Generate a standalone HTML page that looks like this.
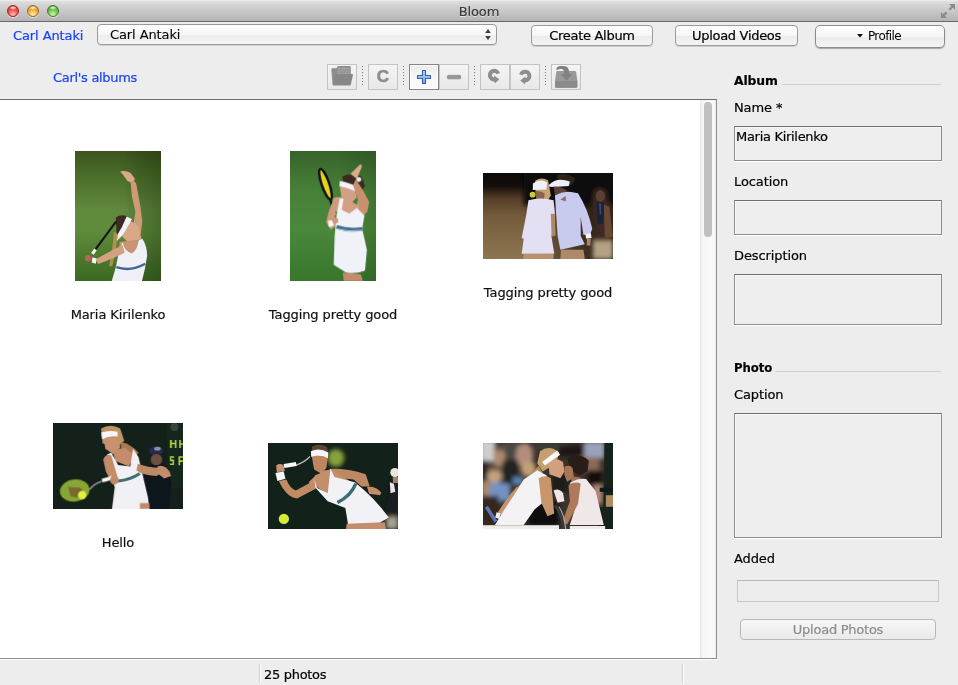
<!DOCTYPE html>
<html lang="en">
<head>
<meta charset="utf-8">
<title>Bloom</title>
<style>
*{box-sizing:border-box;margin:0;padding:0}
html,body{width:958px;height:685px;overflow:hidden;background:#ededed}
body{position:relative;font-family:"DejaVu Sans","Liberation Sans",sans-serif;font-size:13px;color:#000;line-height:16px;letter-spacing:-0.1px;-webkit-text-stroke:0.2px}
.abs{position:absolute}
#titlebar{left:0;top:0;width:958px;height:22px;background:linear-gradient(#f4f4f4 0,#e0e0e0 1px,#d6d6d6 4px,#c2c2c2 14px,#b3b3b3 21px);border-bottom:1px solid #686868}
#title{left:0;top:4px;width:958px;text-align:center;color:#3a3a3a;text-shadow:0 1px 0 rgba(255,255,255,.6)}
.tl{width:12px;height:12px;border-radius:50%;top:5px}
.lnk{color:#1742ff;white-space:nowrap}
.lbl{white-space:nowrap}
.btn{border:1px solid #9a9a9a;border-radius:4px;background:linear-gradient(#ffffff,#f6f6f6 50%,#ececec 51%,#f4f4f4);text-align:center;white-space:nowrap;box-shadow:0 1px 0 rgba(0,0,0,.12)}
.field{border:1px solid #8f8f8f;border-top-color:#6e6e6e;background:#eeeeee;box-shadow:0 1px 0 #fff,inset 1px 1px 0 #f9f9f9}
.tb{width:30px;height:26px;border:1px solid #c3c3c3;background:linear-gradient(#f4f4f4,#e8e8e8);top:64px}
.sep{width:1px;top:66px;height:19px;background:repeating-linear-gradient(#7a7a7a 0,#7a7a7a 1px,transparent 1px,transparent 3px)}
.hr{height:1px;background:#d0d0d0}
.cap{text-align:center;white-space:nowrap;color:#111}
</style>
</head>
<body>
<div id="root" class="abs" style="left:0;top:0;width:958px;height:685px;will-change:transform">
<div id="titlebar" class="abs"></div>
<div class="abs tl" style="left:7px;background:radial-gradient(ellipse 4px 2px at 50% 18%,rgba(255,255,255,.95),rgba(255,255,255,0) 100%),radial-gradient(circle at 50% 85%,#ffc4c0 0,#f2514a 50%,#c22a24 100%);border:1px solid #922;box-shadow:0 1px 0 rgba(255,255,255,.5)"></div>
<div class="abs tl" style="left:27px;background:radial-gradient(ellipse 4px 2px at 50% 18%,rgba(255,255,255,.95),rgba(255,255,255,0) 100%),radial-gradient(circle at 50% 85%,#fff0a8 0,#f2ad36 50%,#c47e16 100%);border:1px solid #9a6a22;box-shadow:0 1px 0 rgba(255,255,255,.5)"></div>
<div class="abs tl" style="left:47px;background:radial-gradient(ellipse 4px 2px at 50% 18%,rgba(255,255,255,.95),rgba(255,255,255,0) 100%),radial-gradient(circle at 50% 85%,#d6f6b2 0,#74c44c 50%,#3f8c28 100%);border:1px solid #3f7a30;box-shadow:0 1px 0 rgba(255,255,255,.5)"></div>
<div id="title" class="abs">Bloom</div>
<svg class="abs" style="left:941px;top:4px" width="14" height="14" viewBox="0 0 14 14"><g fill="#8c8c8c"><path d="M8 0h6v6l-2.200-2.200-2.600 2.600-1.600-1.600 2.600-2.600z"/><path d="M6 14H0V8l2.200 2.200 2.600-2.600 1.600 1.600-2.600 2.600z"/></g></svg>

<div class="abs lnk" style="left:13px;top:28px">Carl Antaki</div>
<div class="abs btn" style="left:97px;top:24px;width:400px;height:21px;text-align:left;padding-left:12px;line-height:20px;-webkit-text-stroke:0.1px">Carl Antaki</div>
<svg class="abs" style="left:484px;top:28px" width="8" height="13" viewBox="0 0 8 13"><path d="M4 1L6.800 5H1.200z M4 12L6.800 8H1.200z" fill="#3a3a3a"/></svg>
<div class="abs btn" style="left:531px;top:25px;width:122px;height:21px;line-height:19px;letter-spacing:-0.3px">Create Album</div>
<div class="abs btn" style="left:675px;top:25px;width:123px;height:21px;line-height:19px;letter-spacing:-0.3px">Upload Videos</div>
<div class="abs btn" style="left:815px;top:25px;width:130px;height:23px;line-height:21px;padding-right:2px;font-size:12px;letter-spacing:-0.6px;-webkit-text-stroke:0;border-radius:5px;border-color:#8c8c8c;box-shadow:0 1px 1px rgba(0,0,0,.3)"><svg width="6" height="4" viewBox="0 0 6 4" style="position:relative;top:-2px;margin-right:5px"><path d="M0 0h6L3 3.600z" fill="#111"/></svg>Profile</div>

<div class="abs lnk" style="left:53px;top:70px;letter-spacing:-0.3px">Carl's albums</div>

<div class="abs tb" style="left:327px"></div>
<div class="abs sep" style="left:362px"></div>
<div class="abs tb" style="left:368px"></div>
<div class="abs sep" style="left:403px"></div>
<div class="abs tb" style="left:409px;border-color:#858585;background:linear-gradient(#ececec,#fafafa 70%);box-shadow:inset 0 0 0 1px #fff"></div>
<div class="abs tb" style="left:439px"></div>
<div class="abs sep" style="left:474px"></div>
<div class="abs tb" style="left:480px"></div>
<div class="abs tb" style="left:510px"></div>
<div class="abs sep" style="left:545px"></div>
<div class="abs tb" style="left:551px"></div>

<svg class="abs" style="left:320px;top:58px" width="280" height="40" viewBox="320 58 280 40">
<defs>
<linearGradient id="pg" x1="0" y1="0" x2="0" y2="1"><stop offset="0" stop-color="#b9d1f3"/><stop offset="1" stop-color="#7fa6de"/></linearGradient>
</defs>
<!-- folder -->
<g>
<path d="M331.3 69.2q0-1 1-1h4.2l1-1.8q.3-.5 1-.5h11.3q1 0 1 1v17.6q0 1-1 1H333.6q-.8 0-1-1z" fill="#8c8c8c"/>
<path d="M338.3 67.6h11.4v8h-13.5z" fill="#a2a2a2"/>
<path d="M339 69.3h10M338.4 71h10.6M337.8 72.6h11" stroke="#8e8e8e" stroke-width=".7" fill="none"/>
<path d="M336.6 73.9h15.6q1 0 .8 1l-2 8.9q-.2 1-1.2 1H334q-1.200 0-.9-1l2.400-8.900q.3-1 1.100-1z" fill="#878787"/>
</g>
<!-- plus -->
<path d="M422.500 70.500h3v5h5v3h-5v5h-3v-5h-5v-3h5z" fill="url(#pg)" stroke="#2f62b3" stroke-width="1.1" stroke-linejoin="round"/>
<!-- minus -->
<rect x="447.400" y="75.400" width="13.300" height="3.400" rx="1" fill="#979797" stroke="#868686" stroke-width=".8"/>
<!-- rotate left -->
<g fill="none" stroke="#8e8e8e">
<path d="M498.200 73.600A4.300 4.300 0 1 0 494.600 79.400" stroke-width="4"/>
</g>
<path d="M494.400 75.600l5 3.800-4.600 3.900-1-3z" fill="#8e8e8e"/>
<!-- rotate right -->
<g fill="none" stroke="#8e8e8e">
<path d="M521 74.800A4.300 4.300 0 1 1 525 80.300" stroke-width="4"/>
</g>
<path d="M525.400 76.400l-5.200 4 4.600 3.800 1.200-3z" fill="#8e8e8e"/>
<!-- inbox -->
<g>
<path d="M557.600 71h17.200q1 0 1.300 1l1.200 8.500v5.800q0 1.500-1.500 1.500H556.500q-1.500 0-1.500-1.500v-5.800l1.300-8.500q.3-1 1.300-1z" fill="#999"/>
<path d="M555 81h22.300v5.300q0 1.500-1.500 1.500H556.500q-1.500 0-1.500-1.500z" fill="#8a8a8a"/>
<path d="M556.500 70.500q-.8-4.300 4-4.400h3.500q4.500.2 5 5v3h3.200l-5.600 6.600-5.700-6.600h3.200v-2.300q-.3-2.800-3-2.800-3.500-.2-4.600 1.500z" fill="#828282"/>
</g>
</svg>
<div class="abs" style="left:368px;top:64px;width:30px;height:26px;text-align:center;font-family:'Liberation Sans',sans-serif;font-weight:bold;font-size:17px;line-height:25px;color:#8e8e8e;letter-spacing:0;-webkit-text-stroke:.6px #8e8e8e">C</div>

<div id="pane" class="abs" style="left:0;top:99px;width:717px;height:560px;background:#fff;border-top:1px solid #6e6e6e;border-right:1px solid #8e8e8e;border-bottom:1px solid #8e8e8e;box-shadow:0 1px 0 #fff"></div>
<div class="abs" style="left:700px;top:100px;width:16px;height:558px;background:linear-gradient(90deg,#e8e8e8,#f6f6f6 20%,#fafafa 80%,#f0f0f0)"></div>
<div class="abs" style="left:704px;top:102px;width:8px;height:135px;border-radius:4px;background:#c0c0c0"></div>


<svg width="0" height="0" style="position:absolute"><defs>
<filter id="b1" x="-20%" y="-20%" width="140%" height="140%"><feGaussianBlur stdDeviation="4"/></filter>
<filter id="b2" x="-20%" y="-20%" width="140%" height="140%"><feGaussianBlur stdDeviation="14"/></filter>
<filter id="b3" x="-30%" y="-30%" width="160%" height="160%"><feGaussianBlur stdDeviation="30"/></filter>
<linearGradient id="grass1" x1="0" y1="0" x2="0" y2="1"><stop offset="0" stop-color="#3c551e"/><stop offset="0.2" stop-color="#4b6e29"/><stop offset="0.45" stop-color="#61893d"/><stop offset="0.62" stop-color="#5e8b3a"/><stop offset="1" stop-color="#3c6822"/></linearGradient><linearGradient id="grassR" x1="0" y1="0" x2="1" y2="0"><stop offset="0" stop-color="#000" stop-opacity="0"/><stop offset="0.55" stop-color="#000" stop-opacity="0"/><stop offset="1" stop-color="#0a1a00" stop-opacity=".28"/></linearGradient>
<linearGradient id="grass2" x1="0" y1="0" x2="0" y2="1"><stop offset="0" stop-color="#37632b"/><stop offset="0.3" stop-color="#478038"/><stop offset="0.6" stop-color="#4a883b"/><stop offset="1" stop-color="#38762d"/></linearGradient>
</defs></svg>

<!-- photo 1 -->
<svg class="abs" style="left:75px;top:151px" width="86" height="130" viewBox="0 0 453 685" preserveAspectRatio="none">
<rect width="453" height="685" fill="url(#grass1)"/><rect width="453" height="685" fill="url(#grassR)"/>
<g filter="url(#b1)">
<path d="M238 108q30-8 55 8l22 30-8 22-30-8-20-30z" fill="#d9a98c"/>
<path d="M292 160q20-6 30 10l22 120 10 80-8 70-40-40 12-80-18-80z" fill="#cf9a78"/>
<path d="M215 350q30-20 60-5l-25 90-30 20z" fill="#3c2c20"/>
<path d="M270 372q40-10 65 30l15 60-60 30-40-40z" fill="#d8a888"/>
<path d="M272 345l28 14-48 84-30 30-6-20 30-50z" fill="#f4f4f8"/>
<path d="M205 425q-5 80-25 180l16 4q22-90 30-170z" fill="#b09050"/>
<path d="M235 480l95-12 20 70-40 30-80-10z" fill="#c99473"/>
<path d="M250 480q10 50 50 60 30-20 35-70l20-8q25 40 25 90l-12 70-18 75H190l25-85 10-50z" fill="#f0f0f8"/>
<path d="M218 612q75 25 152-18" stroke="#44648c" stroke-width="13" fill="none"/>
<path d="M250 495q-60 30-140 75l12 26q80-30 140-60z" fill="#d2a180"/>
<path d="M216 372L105 522" stroke="#161616" stroke-width="11" fill="none"/>
<path d="M108 518l-16 24" stroke="#f4f4f4" stroke-width="16" fill="none"/>
<circle cx="70" cy="565" r="17" fill="#b9645a"/>
<path d="M92 560l22 6-4 28-22-6z" fill="#f6f6f6"/>
</g>
</svg>

<!-- photo 2 -->
<svg class="abs" style="left:290px;top:151px" width="86" height="130" viewBox="0 0 453 685" preserveAspectRatio="none">
<rect width="453" height="685" fill="url(#grass2)"/><rect width="453" height="685" fill="url(#grassR)" opacity=".5"/>
<g filter="url(#b1)">
<ellipse cx="187" cy="175" rx="20" ry="84" transform="rotate(-19 187 175)" fill="#e6d222" stroke="#121212" stroke-width="13"/>
<path d="M212 258l16 48" stroke="#141414" stroke-width="13"/>
<path d="M226 302l8 36" stroke="#eee" stroke-width="13"/>
<path d="M275 135q50-25 100 0l20 50-30 40-80-40z" fill="#3a2a20"/>
<path d="M262 185q40-5 80 20l10 40-30 30-50-20z" fill="#d2a084"/>
<path d="M262 158q45 5 88 30l-6 24q-45-20-84-28z" fill="#f4f4f8"/>
<circle cx="362" cy="150" r="13" fill="#e8e8ee"/>
<path d="M318 120l52-50 10 8-28 70z" fill="#dca98c"/>
<path d="M345 150q40 50 72 120l-10 50-30 30-30-40 10-60-25-70z" fill="#c99070"/>
<path d="M225 250q40-15 70 0l70 40-5 60-80 0-45-40z" fill="#d4a084"/>
<path d="M230 250q20-5 25 10l-20 80 10 50-30 25-25-40 15-60z" fill="#d09a7c"/>
<path d="M262 250l20 0-10 60 40 20 40-30 40 40-12 70 25 110-10 110q-50 20-100 10l-65-40 5-150 10-110z" fill="#f1f1f8"/>
<path d="M245 400q65 22 135 10" stroke="#3f6e90" stroke-width="20" fill="none"/>
<path d="M245 410q65 18 133 8" stroke="#dfe6ee" stroke-width="4" fill="none"/>
<path d="M200 368l26-4 4 30-26 6z" fill="#f8f8f8"/>
<circle cx="238" cy="366" r="16" fill="#cf987c"/>
<path d="M278 640l95 10 10 35h-100z" fill="#c48c6c"/>
</g>
</svg>

<!-- photo 3 -->
<svg class="abs" style="left:483px;top:173px" width="130" height="86" viewBox="0 0 958 634" preserveAspectRatio="none">
<defs><linearGradient id="p3" x1="0" y1="0" x2="0" y2="1"><stop offset="0" stop-color="#0b0908"/><stop offset="0.15" stop-color="#130e0b"/><stop offset="0.3" stop-color="#563f28"/><stop offset="0.5" stop-color="#745b3b"/><stop offset="1" stop-color="#8d7552"/></linearGradient>
<linearGradient id="p3r" x1="0" y1="0" x2="1" y2="0"><stop offset="0" stop-color="#15100d" stop-opacity="0"/><stop offset="0.3" stop-color="#15100d" stop-opacity="0"/><stop offset="0.7" stop-color="#15100d" stop-opacity=".55"/><stop offset="1" stop-color="#15100d" stop-opacity=".9"/></linearGradient></defs>
<rect width="958" height="634" fill="url(#p3)"/>
<rect width="958" height="634" fill="url(#p3r)"/>
<g filter="url(#b2)">
<rect x="300" y="-10" width="670" height="250" fill="#0f0c0a"/>
<path d="M820 130q40-30 85 0l10 80 43 30v280h-150l20-150-20-150z" fill="#3c2a20"/>
<path d="M810 500h148v134H810z" fill="#b4a282"/>
</g>
<g filter="url(#b1)">
<ellipse cx="865" cy="170" rx="34" ry="42" fill="#5c4034"/>
<path d="M835 215l60 0-10 160-40 0z" fill="#1c2036"/>
<path d="M855 225l15 0 0 80-10 0z" fill="#3a4a78"/>
<path d="M890 230l40 20 28 220-60 10z" fill="#6a4a32"/>
<path d="M385 55q50-30 95 0l20 110-30 50-80-40z" fill="#c4a272"/>
<path d="M385 130q40 0 70 20l-10 70-50 0z" fill="#8a6448"/>
<path d="M368 78q50-40 105-8l-6 52-100 4z" fill="#f0f0fa"/>
<circle cx="365" cy="160" r="21" fill="#c2d03a"/>
<path d="M335 200q90-25 185 0l10 100-25 170 20 125H285l15-110-15-5 35-180z" fill="#e2e0f2"/>
<path d="M500 300l30 0 5 160-30 10z" fill="#b08868"/>
<path d="M545 15q70-25 135 25l-25 50-100 0z" fill="#2e2019"/>
<path d="M485 88q60-62 155-25l-8 32-110 8-32-2z" fill="#eceef8"/>
<path d="M520 100q60 0 100 30l-40 60-50-30z" fill="#5c4034"/>
<path d="M530 165q60-35 120-25l50 10q70 110 105 260l-15 45-50 0-20-130 0 140 30 60-180 40-20-100z" fill="#c9cbee"/>
<path d="M570 195l40-25 0 40z" fill="#8a6a6a"/>
<path d="M300 598h220l0 36H295z" fill="#b8906c"/>
<path d="M575 565h165l10 69H570z" fill="#b08a68"/>
<path d="M755 450l40-5 5 35-40 5z" fill="#f4f4f4"/>
<path d="M765 485l30 0-5 50-25 0z" fill="#b08262"/>
</g>
</svg>

<!-- photo 4 -->
<svg class="abs" style="left:53px;top:423px" width="130" height="86" viewBox="0 0 958 634" preserveAspectRatio="none">
<rect width="958" height="634" fill="#14211a"/>
<rect x="840" y="0" width="118" height="480" fill="#15271d"/>
<g filter="url(#b1)">
<circle cx="895" cy="30" r="30" fill="#34463c"/>
<path d="M862 125h14v60h-14zM876 145h22v12h-22zM898 125h12v60h-12zM930 125h12v60h-12zM942 150h16v10h-16zM862 245h30v12h-30zM862 270h30v12h-30zM862 298h30v12h-30zM862 245h10v37h-10zM882 270h10v40h-10zM925 245h12v66h-12zM937 245h21v12h-21zM937 275h21v12h-21z" fill="#b4d444"/>
<path d="M670 330q90-60 180 0l20 120-20 184H680z" fill="#11131f"/>
<ellipse cx="760" cy="205" rx="52" ry="34" fill="#262b48"/>
<ellipse cx="770" cy="190" rx="25" ry="14" fill="#8a8ca8"/>
<ellipse cx="762" cy="270" rx="42" ry="42" fill="#6e4f40"/>
<path d="M355 40q70-40 140 0l30 90-60 60-100-40z" fill="#c09464"/>
<path d="M375 110q60-10 110 10l10 60-50 50-60-40z" fill="#c8926f"/>
<path d="M355 70q60-20 120-5l2 35q-60-10-115 20z" fill="#f6f6fa"/>
<path d="M500 140q70 10 130 80l-30 40-100-80z" fill="#a87a52"/>
<path d="M440 200l90-20 70 60-40 80-100-40z" fill="#c48c6a"/>
<path d="M400 230l30-10 50 90 90 10 20-130 40 60 30 130 40 170 10 84H435l20-160-40-130z" fill="#f1f1f5"/>
<path d="M370 270q20-50 60-30l40 140 10 60-40 10-50-90z" fill="#c48c68"/>
<path d="M625 300q80 30 160 30l20 30-40 30q-90 0-150-40z" fill="#bd8866"/>
<path d="M770 320q50-20 90 40l10 30-50 20-50-40z" fill="#c48e6e"/>
<path d="M480 428q90-10 160-56" stroke="#426c70" stroke-width="22" fill="none"/>
<ellipse cx="160" cy="498" rx="116" ry="88" transform="rotate(-8 160 500)" fill="#86a636" stroke="#1c2418" stroke-width="14"/>
<path d="M110 470l90 10-20 70-50-10zM180 470l40 20-30 40z" fill="#7a6a30"/>
<circle cx="215" cy="532" r="31" fill="#e2ee44"/>
<path d="M270 490q30-40 90-60" stroke="#aaa" stroke-width="10" fill="none"/>
<path d="M362 425l75-22" stroke="#f8f8f8" stroke-width="28"/>
<circle cx="452" cy="420" r="32" fill="#c08a6a"/>
<path d="M640 590h70v44h-70z" fill="#c08a6a"/>
</g>
</svg>

<!-- photo 5 -->
<svg class="abs" style="left:268px;top:443px" width="130" height="86" viewBox="0 0 958 634" preserveAspectRatio="none">
<rect width="958" height="634" fill="#12211a"/>
<g filter="url(#b2)">
<ellipse cx="500" cy="110" rx="62" ry="66" fill="#86a23a"/>
<path d="M900 290q30-20 58 0v250l-70 10-10-60 30-100z" fill="#1d1e20"/>
<path d="M870 545h88v89h-88z" fill="#a8a090"/>
</g>
<g filter="url(#b1)">
<ellipse cx="935" cy="218" rx="34" ry="34" fill="#ece6d8"/>
<path d="M920 250h38v45h-38z" fill="#a88068"/>
<path d="M898 290l30 10 10 60-35 10z" fill="#e6e6ea"/>
<path d="M325 25q55-25 110 5l10 40-125 10z" fill="#5c4430"/>
<path d="M322 95q60-10 118 10l-10 80-40 40-50-30z" fill="#be8660"/>
<path d="M316 60q65-30 128 10l-2 42q-60-30-124-10z" fill="#f4f4fa"/>
<path d="M380 200l60 0 20 60-60 40z" fill="#c08a66"/>
<path d="M205 165q60-20 105-65" stroke="#b8b8b8" stroke-width="10" fill="none"/>
<path d="M118 170l90-16" stroke="#f8f8f8" stroke-width="30"/>
<path d="M60 165q30-20 55 0l10 40-60 10z" fill="#c89270"/>
<path d="M55 222l60-14 14 56-60 16z" fill="#f6f6f8"/>
<path d="M80 280l55-10q30 70 70 80l130-70 30 50-150 80q-80-10-135-130z" fill="#c08a62"/>
<path d="M350 240q30-20 50 0l-10 60-60 40-30-50z" fill="#c48c68"/>
<path d="M470 190q130 0 250 40l30 90-60 0-60-50-170-20z" fill="#be8862"/>
<path d="M730 325q60-10 105 40l-10 20-80-10z" fill="#c48c68"/>
<path d="M345 240l120-50 150 100-60 90-110 0-90-60z" fill="#c48e6a"/>
<path d="M340 260l20 70 80 40 20-180 30 60 150 40q140 110 250 260l-70 40-230 10-20-120-130-50-90-100z" fill="#f1f1f6"/>
<path d="M512 440q100-50 136-140" stroke="#3e6c74" stroke-width="26" fill="none"/>
<path d="M522 450q100-50 136-138" stroke="#e8eef0" stroke-width="4" fill="none"/>
<path d="M580 595l280-10 10 49H575z" fill="#c48e6e"/>
<circle cx="117" cy="560" r="38" fill="#d8ea36"/>
</g>
</svg>

<!-- photo 6 -->
<svg class="abs" style="left:483px;top:443px" width="130" height="86" viewBox="0 0 958 634" preserveAspectRatio="none">
<rect width="958" height="634" fill="#3a322c"/>
<g filter="url(#b2)">
<rect x="-20" y="-20" width="110" height="160" fill="#d0cecc"/>
<rect x="150" y="-10" width="110" height="130" fill="#4a4846"/>
<ellipse cx="120" cy="110" rx="45" ry="80" fill="#b08a70"/>
<rect x="80" y="20" width="80" height="40" fill="#6a5a48"/>
<ellipse cx="305" cy="90" rx="65" ry="90" fill="#b48c7c"/>
<rect x="-10" y="130" width="50" height="150" fill="#2a2422"/>
<ellipse cx="85" cy="245" rx="55" ry="55" fill="#c2a282"/>
<rect x="40" y="165" width="100" height="40" fill="#6a5a40"/>
<rect x="145" y="130" width="115" height="170" fill="#242220"/>
<ellipse cx="335" cy="190" rx="55" ry="60" fill="#c0a078"/>
<path d="M20 310q90-40 180 0v120H20z" fill="#7292c4"/>
<rect x="220" y="250" width="80" height="60" fill="#5a80b0"/>
<rect x="-10" y="280" width="60" height="110" fill="#a88a6c"/>
<rect x="-10" y="390" width="125" height="220" fill="#35261f"/>
<rect x="380" y="-10" width="240" height="70" fill="#3c3a36"/>
<rect x="560" y="20" width="180" height="80" fill="#1c1816"/>
<rect x="745" y="-10" width="150" height="125" fill="#9aa2ba"/>
<rect x="700" y="105" width="160" height="100" fill="#8a6a58"/>
<rect x="770" y="200" width="110" height="110" fill="#121010"/>
<rect x="810" y="310" width="70" height="140" fill="#b48a78"/>
<rect x="330" y="440" width="230" height="170" fill="#100e0e"/>
<rect x="510" y="230" width="120" height="130" fill="#1e1a18"/>
</g>
<g filter="url(#b1)">
<path d="M895 0h63v634h-105v-160h35z" fill="#16241c"/>
<path d="M905 385h53v85h-53z" fill="#b08c60"/>
<path d="M860 330h98v30h-98z" fill="#0e1a14"/>
<path d="M25 470l70 110" stroke="#5c74b4" stroke-width="26"/>
<path d="M620 110q80-50 160 20l-10 80-60 30-70-50z" fill="#2c1e18"/>
<path d="M600 175q40-20 60 10l10 70-50 30-20-50z" fill="#a87456"/>
<path d="M650 245l70 10-10 40-60 0z" fill="#a06e52"/>
<path d="M420 60q70-50 140 10l-20 80-100 60-40-60z" fill="#c4a070"/>
<path d="M480 130q60-30 110 10l10 70-30 50-80-30z" fill="#d2a07e"/>
<path d="M436 140l110-84 22 30-112 80z" fill="#f8f8f8"/>
<path d="M410 170q-80 80-160 160l20 20 170-130z" fill="#b48c5c"/>
<path d="M250 320q-80 90-140 190l30 30 140-150z" fill="#c4946a"/>
<path d="M100 510l30 10-10 40-30-10z" fill="#f4f4f4"/>
<path d="M300 270l100-70 70 40-30 200-60 50-80 115H88q70-120 140-220z" fill="#f4f2f4"/>
<path d="M410 260q50-30 90 0l25 260-50 20-45-100z" fill="#c8966c"/>
<path d="M640 295q60-40 120-30l70 90 60 250H640l60-190z" fill="#f0e8e8"/>
<path d="M630 310q50-30 90-10l-20 150-80 150-35-20 55-150z" fill="#ae7a5a"/>
<path d="M520 350q40-20 70 20l10 60-50 10z" fill="#f0e6e6"/>
<path d="M530 460q50 60 65 174" stroke="#3a3a3a" stroke-width="22" fill="none"/>
<path d="M560 470q40 60 50 164" stroke="#b0b0b0" stroke-width="8" fill="none"/>
<rect x="0" y="606" width="560" height="28" fill="#efecea"/>
<rect x="640" y="612" width="260" height="22" fill="#efecea"/>
</g>
</svg>

<div class="abs cap" style="left:18px;width:200px;top:307px">Maria Kirilenko</div>
<div class="abs cap" style="left:233px;width:200px;top:307px">Tagging pretty good</div>
<div class="abs cap" style="left:448px;width:200px;top:285px">Tagging pretty good</div>
<div class="abs cap" style="left:18px;width:200px;top:535px">Hello</div>

<div class="abs lbl" style="left:734px;top:73px;font-weight:bold;transform:scaleX(.95);transform-origin:0 0">Album</div>
<div class="abs hr" style="left:782px;top:84px;width:159px"></div>
<div class="abs lbl" style="left:734px;top:100px">Name *</div>
<div class="abs field" style="left:734px;top:126px;width:208px;height:35px;padding:2px 1px;letter-spacing:-0.3px">Maria Kirilenko</div>
<div class="abs lbl" style="left:734px;top:174px">Location</div>
<div class="abs field" style="left:734px;top:200px;width:208px;height:35px"></div>
<div class="abs lbl" style="left:734px;top:248px">Description</div>
<div class="abs field" style="left:734px;top:274px;width:208px;height:51px"></div>
<div class="abs lbl" style="left:734px;top:360px;font-weight:bold;transform:scaleX(.9);transform-origin:0 0">Photo</div>
<div class="abs hr" style="left:775px;top:371px;width:166px"></div>
<div class="abs lbl" style="left:734px;top:387px">Caption</div>
<div class="abs field" style="left:734px;top:413px;width:208px;height:125px"></div>
<div class="abs lbl" style="left:734px;top:551px">Added</div>
<div class="abs" style="left:737px;top:580px;width:202px;height:22px;border:1px solid #c8c8c8;border-top-color:#b8b8b8;background:#ededed"></div>
<div class="abs btn" style="left:740px;top:619px;width:196px;height:21px;line-height:19px;letter-spacing:-0.25px;color:#8c8c8c;border-color:#b8b8b8;background:linear-gradient(#f7f7f7,#eaeaea);box-shadow:none">Upload Photos</div>

<div class="abs lbl" style="left:264px;top:667px;letter-spacing:-0.3px">25 photos</div>
<div class="abs" style="left:259px;top:664px;width:2px;height:19px;border-left:1px solid #cfcfcf;background:#fff"></div>
<div class="abs" style="left:682px;top:664px;width:2px;height:19px;border-left:1px solid #cfcfcf;background:#fff"></div>
</div>
</body>
</html>
